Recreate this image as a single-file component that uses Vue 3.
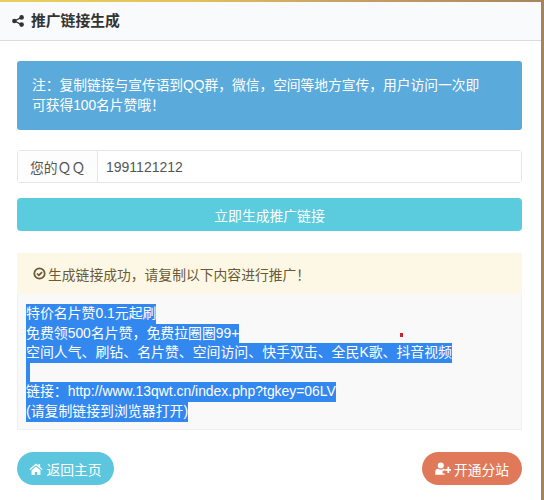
<script setup>
const lines = [
  '特价名片赞0.1元起刷',
  '免费领500名片赞，免费拉圈圈99+',
  '空间人气、刷钻、名片赞、空间访问、快手双击、全民K歌、抖音视频',
  '\u00a0',
  '链接：http://www.13qwt.cn/index.php?tgkey=06LV',
  '(请复制链接到浏览器打开)'
]
</script>

<template>
  <div class="page">
    <div class="strip"></div>
    <div class="body-row">
      <main class="card">
        <header class="head">
          <svg class="share" viewBox="0 0 12 12"><circle cx="9.6" cy="2.4" r="2.3"/><circle cx="2.4" cy="6" r="2.3"/><circle cx="9.6" cy="9.6" r="2.3"/><path d="M2.4 6 9.6 2.4M2.4 6l7.2 3.6" stroke="#333" stroke-width="1.3" fill="none"/></svg>
          <h1>推广链接生成</h1>
        </header>
        <div class="content">
          <div class="note">注：复制链接与宣传语到QQ群，微信，空间等地方宣传，用户访问一次即<br>可获得100名片赞哦！</div>
          <div class="group">
            <span class="addon">您的ＱＱ</span>
            <input class="field" value="1991121212">
          </div>
          <button class="make">立即生成推广链接</button>
          <div class="result">
            <div class="ok">
              <svg class="check" viewBox="0 0 14 14"><circle cx="7" cy="7" r="5.6" fill="none" stroke="#6b5a35" stroke-width="1.9"/><path d="M4.3 7l2 2 3.5-3.6" fill="none" stroke="#6b5a35" stroke-width="1.9"/></svg>
              <span>生成链接成功，请复制以下内容进行推广！</span>
            </div>
            <div class="copy">
              <span v-for="(l, i) in lines" :key="i" class="sel">{{ l }}</span>
              <i class="dot"></i>
            </div>
          </div>
          <div class="actions">
            <a class="pill home">
              <svg viewBox="0 0 16 14" class="pi"><path d="M8 0.6 0.3 7.2l1 1.1L8 2.6l6.7 5.7 1-1.1L12.8 4.7V1.2h-2v1.8zM2.8 8.6V14h3.8v-3.6h2.8V14h3.8V8.6L8 4.1z" fill="#fff"/></svg>
              返回主页
            </a>
            <a class="pill site">
              <svg viewBox="0 0 18 14" class="pi2"><circle cx="6.5" cy="3.7" r="3.4" fill="#fff"/><path d="M0.3 14v-3.2c0-2 1.4-3.4 3.2-3.4 1 .7 2 1 3 1s2-.3 3-1c.5 0 1 .1 1.400.3v1.800H8.600v3h2.300V14z" fill="#fff"/><path d="M14 5v2.500h-2.500v2H14V12h2V9.500h2v-2h-2V5z" fill="#fff"/></svg>
              开通分站
            </a>
          </div>
        </div>
      </main>
      <div class="edge"></div>
    </div>
  </div>
</template>

<style scoped>
.page {
  width: 544px;
  height: 500px;
  overflow: hidden;
  background: #fff;
  font-family: "Liberation Sans", "Noto Sans CJK SC", sans-serif;
  font-size: 13.8px;
  color: #555;
}
.strip {
  height: 2px;
  background: linear-gradient(90deg, #e8d060 0%, #e2c25a 35%, #c9a468 60%, #a8845f 100%);
}
.body-row {
  display: flex;
  height: 498px;
}
.card {
  width: 541px;
  background: #fff;
  border-top-right-radius: 3px;
}
.edge {
  width: 3px;
  background: #a5835f;
}
.head {
  height: 38px;
  background: #f9fafc;
  border-bottom: 1px solid #d8dce2;
  display: flex;
  align-items: center;
  padding-left: 12px;
  gap: 7px;
}
.share {
  width: 12px;
  height: 12px;
  fill: #333;
}
h1 {
  margin: 0;
  font-size: 14.8px;
  line-height: 20px;
  font-weight: 700;
  color: #333;
}
.content {
  padding: 20px 19px 0 17px;
}
.note {
  height: 69px;
  box-sizing: border-box;
  background: #5aaadc;
  border-radius: 3px;
  color: #fff;
  padding: 15px 15px 0;
  line-height: 20px;
  letter-spacing: -0.06px;
}
.group {
  display: flex;
  height: 33px;
  margin-top: 20px;
  box-sizing: border-box;
  border: 1px solid #e6e6e6;
  border-radius: 3px;
}
.addon {
  width: 80px;
  flex: none;
  background: #fdfdfd;
  border-right: 1px solid #e6e6e6;
  display: flex;
  align-items: center;
  padding-left: 12px;
  box-sizing: border-box;
  white-space: nowrap;
}
.field {
  flex: 1;
  min-width: 0;
  border: 0;
  outline: 0;
  background: #fff;
  padding: 0 8px;
  font: inherit;
  font-size: 14px;
  color: #555;
}
.make {
  display: block;
  width: 100%;
  height: 33px;
  margin-top: 15px;
  border: 0;
  border-radius: 4px;
  background: #5bcbde;
  color: #fff;
  font: inherit;
}
.result {
  margin-top: 22px;
}
.ok {
  height: 41px;
  box-sizing: border-box;
  background: #fdf8e6;
  display: flex;
  align-items: center;
  padding-left: 16px;
  gap: 2px;
  color: #6b5a35;
}
.check {
  width: 13px;
  height: 13px;
}
.copy {
  position: relative;
  height: 136px;
  box-sizing: border-box;
  background: #f9f9f9;
  border: 1px solid #f0f0f0;
  border-top: 0;
  padding: 10px 0 0 8px;
  color: #fff;
  font-size: 13.9px;
}
.sel {
  display: block;
  width: fit-content;
  height: 19.6px;
  line-height: 19.6px;
  background: #3388f0;
  white-space: nowrap;
}
.dot {
  position: absolute;
  left: 382px;
  top: 39px;
  width: 3px;
  height: 4px;
  background: #d02030;
}
.actions {
  display: flex;
  justify-content: space-between;
  margin-top: 22px;
}
.pill {
  height: 33px;
  border-radius: 17px;
  display: flex;
  align-items: center;
  justify-content: center;
  gap: 3px;
  color: #fff;
  box-sizing: border-box;
}
.home {
  width: 97px;
  background: #5bc6de;
}
.site {
  width: 100px;
  background: #e0795a;
}
.pi {
  width: 14px;
  height: 12px;
}
.pi2 {
  width: 16px;
  height: 13px;
}
</style>
